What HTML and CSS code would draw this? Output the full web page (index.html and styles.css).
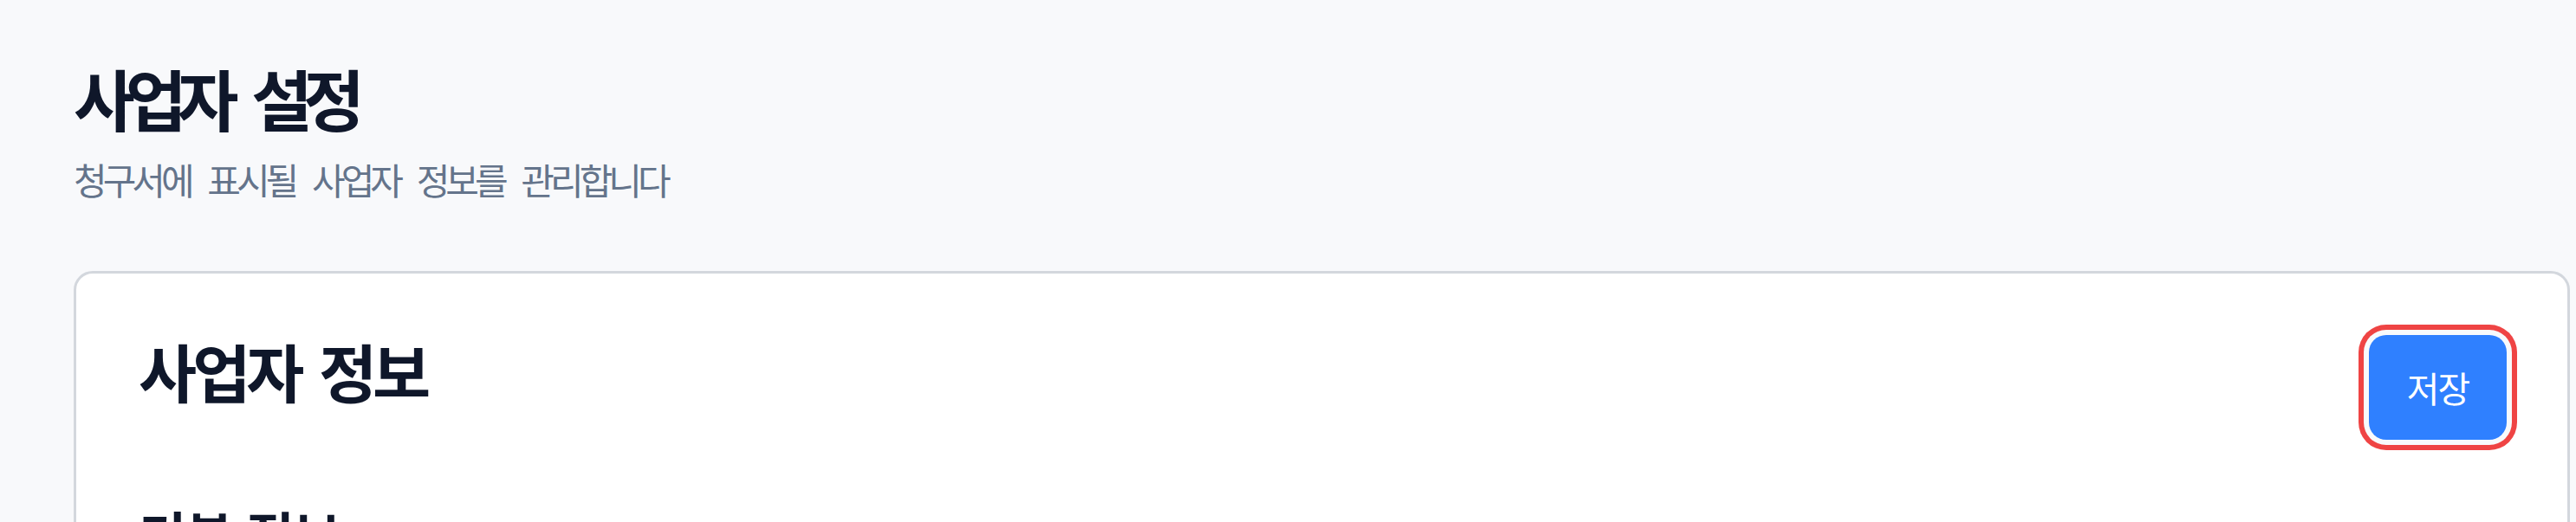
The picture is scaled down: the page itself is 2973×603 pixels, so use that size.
FILE: index.html
```html
<!DOCTYPE html>
<html lang="ko">
<head>
<meta charset="utf-8">
<title>사업자 설정</title>
<link rel="stylesheet" href="styles.css">
</head>
<body>
<main class="page">
  <header class="page-header">
    <h1 class="page-title">사업자 설정</h1>
    <p class="page-subtitle">청구서에 표시될 사업자 정보를 관리합니다</p>
  </header>
  <section class="card">
    <div class="card-head">
      <h2 class="card-title">사업자 정보</h2>
      <button class="btn-save" type="button">저장</button>
    </div>
    <h3 class="section-title">기본 정보</h3>
  </section>
</main>
</body>
</html>
```

FILE: styles.css
```css
html, body {
  margin: 0;
  padding: 0;
}
body {
  background: #f8f9fb;
  font-family: "Noto Sans CJK KR", "Noto Sans", sans-serif;
  color: #0f172a;
  overflow: hidden;
}
.page {
  padding: 67px 7px 0 85px;
}
.page-header {
  display: flex;
  flex-direction: column;
  gap: 21px;
}
.page-title {
  margin: 0;
  font-size: 77px;
  font-weight: 700;
  letter-spacing: -11px;
  word-spacing: 15px;
  line-height: 1.2;
  color: #0f172a;
}
.page-subtitle {
  margin: 0;
  font-size: 42px;
  font-weight: 400;
  letter-spacing: -5px;
  word-spacing: 13px;
  line-height: 1.3;
  color: #64748b;
}
.card {
  margin-top: 78px;
  background: #ffffff;
  border: 3px solid #d3d7dd;
  border-radius: 22px;
  padding: 71px 70px 0 72px;
  min-height: 400px;
}
.card-head {
  display: flex;
  justify-content: space-between;
  align-items: flex-start;
}
.card-title {
  margin: 0;
  font-size: 73px;
  font-weight: 700;
  letter-spacing: -5px;
  word-spacing: 6px;
  line-height: 1.1;
  color: #0f172a;
}
.btn-save {
  width: 159px;
  height: 121px;
  border: none;
  border-radius: 20px;
  background: #2f80ff;
  color: #ffffff;
  font-family: inherit;
  font-size: 41px;
  letter-spacing: -2px;
  box-shadow: 0 0 0 6px #f8fafc, 0 0 0 12px #ef4444;
  cursor: pointer;
}
.section-title {
  margin: 69px 0 0;
  font-size: 60px;
  font-weight: 700;
  letter-spacing: -1px;
  line-height: 1.3;
  color: #0f172a;
}
```
